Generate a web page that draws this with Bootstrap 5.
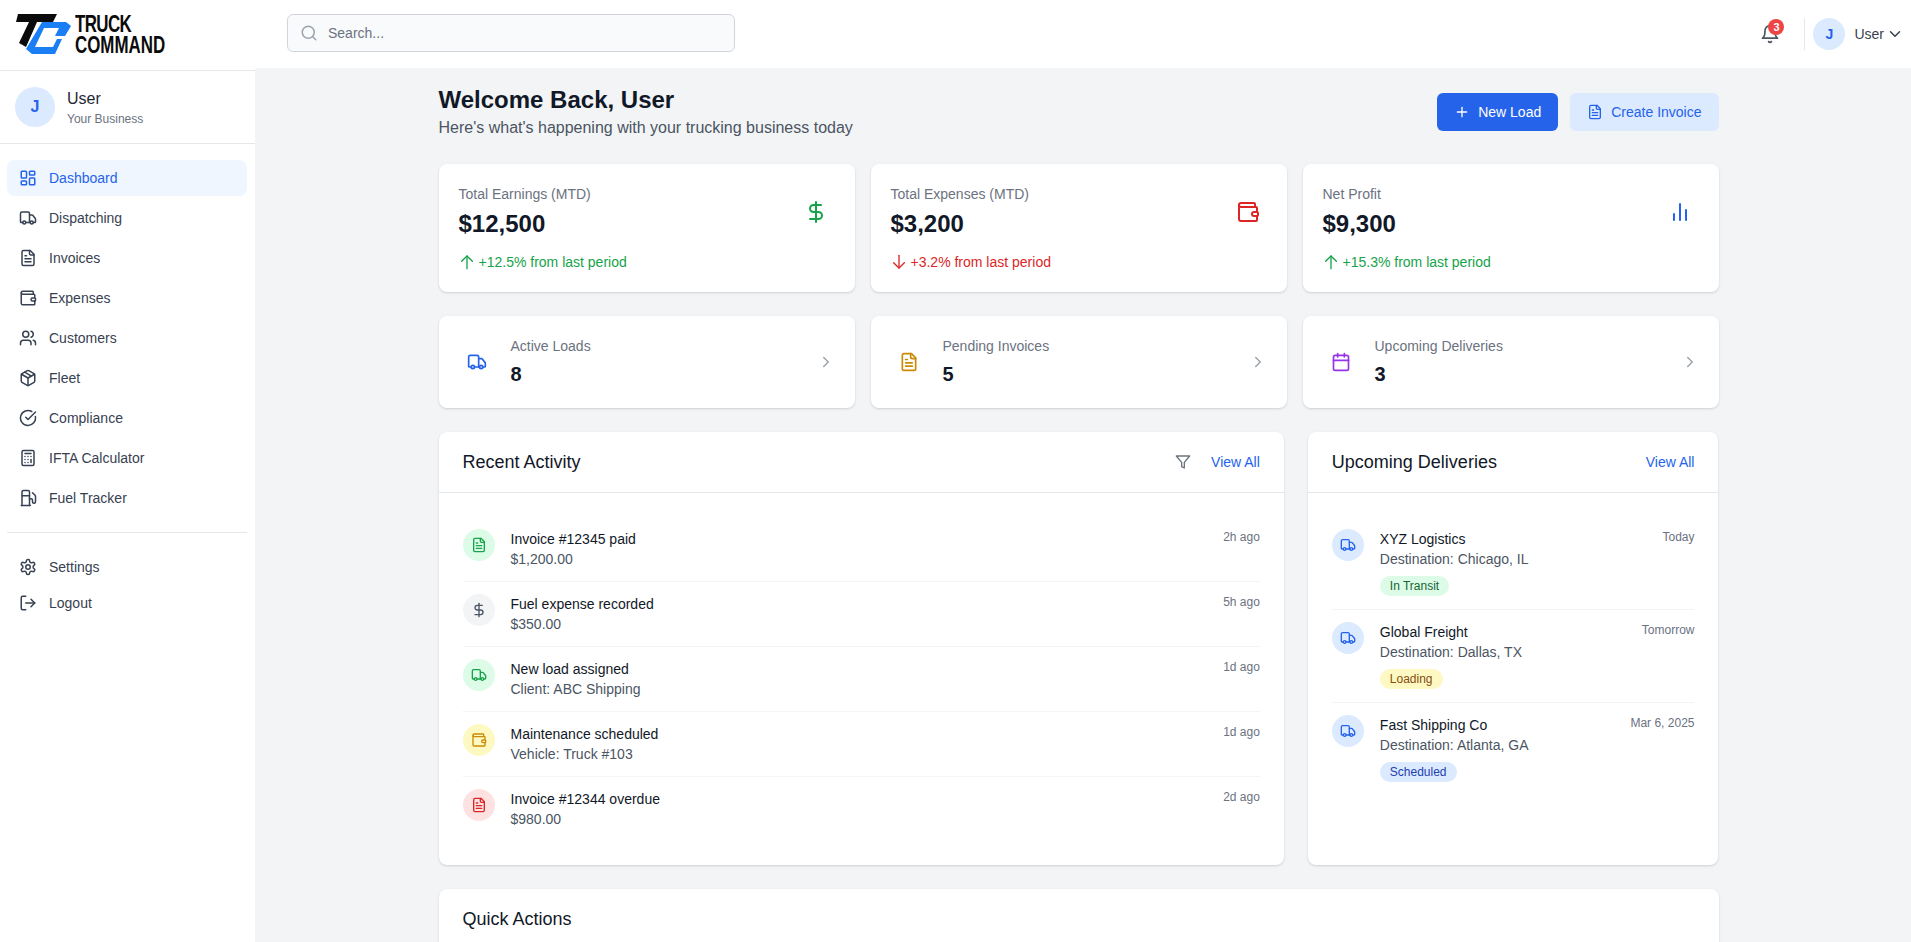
<!DOCTYPE html>
<html lang="en">
<head>
    <meta charset="UTF-8">
    <meta name="viewport" content="width=device-width, initial-scale=1">
    <title>Truck Command</title>
    <link href="https://cdn.jsdelivr.net/npm/bootstrap@5.3.3/dist/css/bootstrap.min.css" rel="stylesheet">
    <style>
        html, body { height: 100%; overflow: hidden; }
        body { font-family: "Liberation Sans", Arial, sans-serif; font-size: 14px; color: #111827; background: #f3f4f6; }
        .ico { fill: none; stroke: currentColor; stroke-width: 2; stroke-linecap: round; stroke-linejoin: round; flex-shrink: 0; display: block; }

        .topbar { height: 68px; background: #fff; }
        .logo-box { width: 287px; padding-left: 14px; }
        .logo-words { margin-left: 1px; margin-top: 2px; font-weight: 700; font-size: 23px; line-height: 21px; color: #0b0b0b; white-space: nowrap; transform: scaleX(.735); transform-origin: left center; }
        .logo-tight { letter-spacing: -.8px; }
        .search-box { width: 448px; height: 38px; margin-bottom: 2px; background: #f9fafb; border: 1px solid #d1d5db; border-radius: 6px; padding: 0 12px; color: #9ca3af; }
        .search-box input { border: 0; outline: 0; background: transparent; font-size: 14px; width: 100%; color: #374151; }
        .search-box input::placeholder { color: #6b7280; opacity: 1; }
        .top-right { padding-right: 7px; }
        .bell-wrap { width: 20px; height: 20px; color: #4b5563; margin-right: 24px; }
        .bell-count { position: absolute; top: -5px; right: -4px; width: 16px; height: 16px; border-radius: 50%; background: #ef4444; color: #fff; font-size: 11px; font-weight: 700; line-height: 16px; text-align: center; }
        .top-sep { width: 1px; height: 32px; background: #e5e7eb; margin-right: 8px; }
        .avatar-circle { background: #dbeafe; color: #2563eb; border-radius: 50%; font-weight: 700; flex-shrink: 0; }
        .avatar-sm { width: 32px; height: 32px; font-size: 14px; }
        .avatar-md { width: 40px; height: 40px; font-size: 16px; }
        .top-user { color: #374151; margin-left: 9px; margin-right: 2px; }
        .top-caret { color: #374151; }

        .app-body { height: calc(100vh - 68px); }
        .sidebar { width: 256px; background: #fff; border-right: 1px solid #f3f4f6; padding-top: 2px; flex-shrink: 0; }
        .side-user { border-top: 1px solid #e5e7eb; border-bottom: 1px solid #e5e7eb; padding: 16px 15px; height: 74px; }
        .side-user-name { font-size: 16px; line-height: 24px; color: #1f2937; }
        .side-user-biz { font-size: 12px; line-height: 16px; color: #6b7280; }
        .side-nav { padding: 16px 8px 16px 7px; }
        .side-nav .nav-link { display: flex; align-items: center; gap: 12px; height: 36px; padding: 0 12px; border-radius: 8px; color: #374151; font-size: 14px; margin-bottom: 4px; }
        .side-nav .nav-link.active { background: #eff6ff; color: #2563eb; }
        .side-extra { margin: 0 8px 0 7px; padding-top: 16px; border-top: 1px solid #e5e7eb; }
        .side-extra .nav-link { display: flex; align-items: center; gap: 12px; height: 36px; padding: 0 12px; color: #374151; font-size: 14px; }

        .main-area { padding-top: 16px; overflow: hidden; }
        .page-wrap { width: 1280px; margin-left: 182.5px; }
        .page-head { margin-bottom: 24px; }
        .page-title { font-size: 24px; line-height: 32px; font-weight: 700; color: #111827; margin: 0; }
        .page-sub { font-size: 16px; line-height: 24px; color: #4b5563; margin: 0; }
        .btn-head { display: inline-flex; align-items: center; gap: 8px; height: 38px; padding: 0 16px; font-size: 14px; border-radius: 6px; border: 1px solid transparent; }
        .btn-new { background: #2563eb; color: #fff; }
        .btn-inv { background: #dbeafe; color: #2563eb; }

        .tile { border: 0; border-radius: 8px; background: #fff; box-shadow: 0 1px 3px rgba(0,0,0,.1), 0 1px 2px rgba(0,0,0,.06); }
        .stat-tile { height: 128px; padding: 20px; }
        .stat-label { font-size: 14px; line-height: 20px; color: #6b7280; }
        .stat-value { font-size: 24px; line-height: 32px; font-weight: 700; color: #111827; margin-top: 4px; }
        .stat-delta { display: flex; align-items: center; gap: 4px; line-height: 20px; margin-top: 12px; }
        .stat-icon { width: 40px; height: 40px; margin-top: 8px; margin-right: -1px; }
        .mini-tile { height: 92px; padding: 20px; }
        .mini-icon { width: 36px; height: 36px; margin-right: 16px; }
        .mini-value { font-size: 20px; line-height: 28px; font-weight: 700; color: #111827; margin-top: 4px; }
        .mini-arrow { color: #9ca3af; }
        .up-green { color: #16a34a; }
        .down-red { color: #dc2626; }
        .c-blue { color: #2563eb; }
        .c-amber { color: #ca8a04; }
        .c-purple { color: #9333ea; }

        .tile-head { height: 61px; padding: 0 24px; border-bottom: 1px solid #e5e7eb; }
        .tile-title { font-size: 18px; font-weight: 400; color: #111827; margin: 2px 0 0; }
        .view-all { color: #2563eb; text-decoration: none; font-size: 14px; }
        .filter-ico { color: #6b7280; margin-right: 20px; }
        .tile-body { padding: 24px; }
        .feed-row { display: flex; gap: 16px; padding: 12px 0; border-bottom: 1px solid #f3f4f6; }
        .feed-row:last-child { border-bottom: 0; }
        .feed-dot { width: 32px; height: 32px; border-radius: 50%; flex-shrink: 0; }
        .dot-green { background: #dcfce7; color: #16a34a; }
        .dot-gray { background: #f3f4f6; color: #4b5563; }
        .dot-yellow { background: #fef9c3; color: #ca8a04; }
        .dot-red { background: #fee2e2; color: #dc2626; }
        .dot-blue { background: #dbeafe; color: #2563eb; }
        .feed-title { line-height: 20px; color: #111827; }
        .feed-sub { line-height: 20px; color: #4b5563; }
        .feed-time { font-size: 12px; line-height: 16px; color: #6b7280; white-space: nowrap; }
        .state-pill { display: inline-block; font-size: 12px; line-height: 16px; padding: 2px 10px; border-radius: 10px; margin-top: 7px; margin-bottom: 1px; vertical-align: top; }
        .pill-green { background: #dcfce7; color: #166534; }
        .pill-yellow { background: #fef9c3; color: #854d0e; }
        .pill-blue { background: #dbeafe; color: #1e40af; }
    </style>
</head>
<body>

    <svg width="0" height="0" class="position-absolute">
        <symbol id="i-dashboard" viewBox="0 0 24 24"><rect x="3" y="3" width="7" height="9" rx="1"/><rect x="14" y="3" width="7" height="5" rx="1"/><rect x="14" y="12" width="7" height="9" rx="1"/><rect x="3" y="16" width="7" height="5" rx="1"/></symbol>
        <symbol id="i-truck" viewBox="0 0 24 24"><path d="M14 18V6a2 2 0 0 0-2-2H4a2 2 0 0 0-2 2v11a1 1 0 0 0 1 1h2"/><path d="M15 18H9"/><path d="M19 18h2a1 1 0 0 0 1-1v-3.65a1 1 0 0 0-.22-.624l-3.48-4.35A1 1 0 0 0 17.52 8H14"/><circle cx="17" cy="18" r="2"/><circle cx="7" cy="18" r="2"/></symbol>
        <symbol id="i-file" viewBox="0 0 24 24"><path d="M15 2H6a2 2 0 0 0-2 2v16a2 2 0 0 0 2 2h12a2 2 0 0 0 2-2V7Z"/><path d="M14 2v4a2 2 0 0 0 2 2h4"/><path d="M10 9H8"/><path d="M16 13H8"/><path d="M16 17H8"/></symbol>
        <symbol id="i-wallet" viewBox="0 0 24 24"><path d="M19 7V4a1 1 0 0 0-1-1H5a2 2 0 0 0 0 4h15a1 1 0 0 1 1 1v4h-3a2 2 0 0 0 0 4h3a1 1 0 0 0 1-1v-2a1 1 0 0 0-1-1"/><path d="M3 5v14a2 2 0 0 0 2 2h15a1 1 0 0 0 1-1v-4"/></symbol>
        <symbol id="i-users" viewBox="0 0 24 24"><path d="M16 21v-2a4 4 0 0 0-4-4H6a4 4 0 0 0-4 4v2"/><circle cx="9" cy="7" r="4"/><path d="M22 21v-2a4 4 0 0 0-3-3.87"/><path d="M16 3.13a4 4 0 0 1 0 7.75"/></symbol>
        <symbol id="i-box" viewBox="0 0 24 24"><path d="m7.5 4.27 9 5.15"/><path d="M21 8a2 2 0 0 0-1-1.73l-7-4a2 2 0 0 0-2 0l-7 4A2 2 0 0 0 3 8v8a2 2 0 0 0 1 1.73l7 4a2 2 0 0 0 2 0l7-4A2 2 0 0 0 21 16Z"/><path d="m3.3 7 8.7 5 8.7-5"/><path d="M12 22V12"/></symbol>
        <symbol id="i-check" viewBox="0 0 24 24"><path d="M21.801 10A10 10 0 1 1 17 3.335"/><path d="m9 11 3 3L22 4"/></symbol>
        <symbol id="i-calc" viewBox="0 0 24 24"><rect x="4" y="2" width="16" height="20" rx="2"/><path d="M8 6h8"/><path d="M16 14v4"/><path d="M16 10h.01"/><path d="M12 10h.01"/><path d="M8 10h.01"/><path d="M12 14h.01"/><path d="M8 14h.01"/><path d="M12 18h.01"/><path d="M8 18h.01"/></symbol>
        <symbol id="i-fuel" viewBox="0 0 24 24"><path d="M3 22h12"/><path d="M4 9h10"/><path d="M14 22V4a2 2 0 0 0-2-2H6a2 2 0 0 0-2 2v18"/><path d="M14 13h2a2 2 0 0 1 2 2v2a2 2 0 0 0 2 2a2 2 0 0 0 2-2V9.83a2 2 0 0 0-.59-1.42L18 5"/></symbol>
        <symbol id="i-gear" viewBox="0 0 24 24"><path d="M12.22 2h-.44a2 2 0 0 0-2 2v.18a2 2 0 0 1-1 1.73l-.43.25a2 2 0 0 1-2 0l-.15-.08a2 2 0 0 0-2.73.73l-.22.38a2 2 0 0 0 .73 2.73l.15.1a2 2 0 0 1 1 1.72v.51a2 2 0 0 1-1 1.74l-.15.09a2 2 0 0 0-.73 2.73l.22.38a2 2 0 0 0 2.73.73l.15-.08a2 2 0 0 1 2 0l.43.25a2 2 0 0 1 1 1.73V20a2 2 0 0 0 2 2h.44a2 2 0 0 0 2-2v-.18a2 2 0 0 1 1-1.73l.43-.25a2 2 0 0 1 2 0l.15.08a2 2 0 0 0 2.73-.73l.22-.39a2 2 0 0 0-.73-2.73l-.15-.08a2 2 0 0 1-1-1.74v-.5a2 2 0 0 1 1-1.74l.15-.09a2 2 0 0 0 .73-2.73l-.22-.38a2 2 0 0 0-2.73-.73l-.15.08a2 2 0 0 1-2 0l-.43-.25a2 2 0 0 1-1-1.73V4a2 2 0 0 0-2-2z"/><circle cx="12" cy="12" r="3"/></symbol>
        <symbol id="i-logout" viewBox="0 0 24 24"><path d="M9 21H5a2 2 0 0 1-2-2V5a2 2 0 0 1 2-2h4"/><path d="m16 17 5-5-5-5"/><path d="M21 12H9"/></symbol>
        <symbol id="i-bell" viewBox="0 0 24 24"><path d="M6 8a6 6 0 0 1 12 0c0 7 3 9 3 9H3s3-2 3-9"/><path d="M10.3 21a1.94 1.94 0 0 0 3.4 0"/></symbol>
        <symbol id="i-search" viewBox="0 0 24 24"><circle cx="11" cy="11" r="8"/><path d="m21 21-4.3-4.3"/></symbol>
        <symbol id="i-down" viewBox="0 0 24 24"><path d="m6 9 6 6 6-6"/></symbol>
        <symbol id="i-right" viewBox="0 0 24 24"><path d="m9 18 6-6-6-6"/></symbol>
        <symbol id="i-plus" viewBox="0 0 24 24"><path d="M5 12h14"/><path d="M12 5v14"/></symbol>
        <symbol id="i-dollar" viewBox="0 0 24 24"><path d="M12 2v20"/><path d="M17 5H9.5a3.5 3.5 0 0 0 0 7h5a3.5 3.5 0 0 1 0 7H6"/></symbol>
        <symbol id="i-arrow-up" viewBox="0 0 24 24"><path d="m4 11 8-8 8 8"/><path d="M12 22V3"/></symbol>
        <symbol id="i-arrow-down" viewBox="0 0 24 24"><path d="M12 2v19"/><path d="m20 13-8 8-8-8"/></symbol>
        <symbol id="i-bars" viewBox="0 0 24 24"><path d="M18 20V10"/><path d="M12 20V4"/><path d="M6 20v-6"/></symbol>
        <symbol id="i-cal" viewBox="0 0 24 24"><rect x="3" y="4" width="18" height="18" rx="2"/><path d="M16 2v4"/><path d="M8 2v4"/><path d="M3 10h18"/></symbol>
        <symbol id="i-filter" viewBox="0 0 24 24"><path d="M22 3H2l8 9.46V19l4 2v-8.54L22 3z"/></symbol>
    </svg>

    <header class="topbar d-flex align-items-center">
        <div class="logo-box d-flex align-items-center">
            <svg width="60" height="68" viewBox="14 0 60 68" class="d-block flex-shrink-0">
                <polygon fill="#0b0b0b" points="18,14 57,14 53,22 37,22 26,47 19,43 29,22 16,22"/>
                <polygon fill="#1a7ef5" points="42,22 66,22 71,26 65,36 55,36 59,28 44,28 35,47 53,47 57,39 62,39 55,54 32,54 26,49"/>
            </svg>
            <div class="logo-words"><span class="logo-tight">TRUCK</span><br>COMMAND</div>
        </div>
        <div class="search-box d-flex align-items-center gap-2">
            <svg class="ico" width="18" height="18"><use href="#i-search"/></svg>
            <input type="text" placeholder="Search...">
        </div>
        <div class="top-right ms-auto d-flex align-items-center">
            <div class="bell-wrap position-relative">
                <svg class="ico" width="20" height="20"><use href="#i-bell"/></svg>
                <span class="bell-count">3</span>
            </div>
            <div class="top-sep"></div>
            <div class="avatar-circle avatar-sm d-flex align-items-center justify-content-center">J</div>
            <span class="top-user">User</span>
            <svg class="ico top-caret" width="18" height="18"><use href="#i-down"/></svg>
        </div>
    </header>

    <div class="app-body d-flex">
        <aside class="sidebar">
            <div class="side-user d-flex align-items-center gap-2">
                <div class="avatar-circle avatar-md d-flex align-items-center justify-content-center me-1">J</div>
                <div>
                    <div class="side-user-name">User</div>
                    <div class="side-user-biz">Your Business</div>
                </div>
            </div>
            <nav class="side-nav nav flex-column">
                <a class="nav-link active" href="#"><svg class="ico" width="18" height="18"><use href="#i-dashboard"/></svg>Dashboard</a>
                <a class="nav-link" href="#"><svg class="ico" width="18" height="18"><use href="#i-truck"/></svg>Dispatching</a>
                <a class="nav-link" href="#"><svg class="ico" width="18" height="18"><use href="#i-file"/></svg>Invoices</a>
                <a class="nav-link" href="#"><svg class="ico" width="18" height="18"><use href="#i-wallet"/></svg>Expenses</a>
                <a class="nav-link" href="#"><svg class="ico" width="18" height="18"><use href="#i-users"/></svg>Customers</a>
                <a class="nav-link" href="#"><svg class="ico" width="18" height="18"><use href="#i-box"/></svg>Fleet</a>
                <a class="nav-link" href="#"><svg class="ico" width="18" height="18"><use href="#i-check"/></svg>Compliance</a>
                <a class="nav-link" href="#"><svg class="ico" width="18" height="18"><use href="#i-calc"/></svg>IFTA Calculator</a>
                <a class="nav-link mb-0" href="#"><svg class="ico" width="18" height="18"><use href="#i-fuel"/></svg>Fuel Tracker</a>
            </nav>
            <nav class="side-extra nav flex-column">
                <a class="nav-link" href="#"><svg class="ico" width="18" height="18"><use href="#i-gear"/></svg>Settings</a>
                <a class="nav-link" href="#"><svg class="ico" width="18" height="18"><use href="#i-logout"/></svg>Logout</a>
            </nav>
        </aside>

        <main class="main-area flex-grow-1">
            <div class="page-wrap">
                <div class="page-head d-flex justify-content-between align-items-center">
                    <div>
                        <h1 class="page-title">Welcome Back, User</h1>
                        <p class="page-sub">Here's what's happening with your trucking business today</p>
                    </div>
                    <div class="d-flex gap-2">
                        <button class="btn-head btn-new me-1"><svg class="ico" width="16" height="16"><use href="#i-plus"/></svg>New Load</button>
                        <button class="btn-head btn-inv"><svg class="ico" width="16" height="16"><use href="#i-file"/></svg>Create Invoice</button>
                    </div>
                </div>

                <div class="row g-3 mb-4">
                    <div class="col-4">
                        <div class="card tile stat-tile flex-row justify-content-between">
                            <div>
                                <div class="stat-label">Total Earnings (MTD)</div>
                                <div class="stat-value">$12,500</div>
                                <div class="stat-delta up-green"><svg class="ico" width="16" height="16"><use href="#i-arrow-up"/></svg>+12.5% from last period</div>
                            </div>
                            <div class="stat-icon up-green d-flex align-items-center justify-content-center"><svg class="ico" width="24" height="24"><use href="#i-dollar"/></svg></div>
                        </div>
                    </div>
                    <div class="col-4">
                        <div class="card tile stat-tile flex-row justify-content-between">
                            <div>
                                <div class="stat-label">Total Expenses (MTD)</div>
                                <div class="stat-value">$3,200</div>
                                <div class="stat-delta down-red"><svg class="ico" width="16" height="16"><use href="#i-arrow-down"/></svg>+3.2% from last period</div>
                            </div>
                            <div class="stat-icon down-red d-flex align-items-center justify-content-center"><svg class="ico" width="24" height="24"><use href="#i-wallet"/></svg></div>
                        </div>
                    </div>
                    <div class="col-4">
                        <div class="card tile stat-tile flex-row justify-content-between">
                            <div>
                                <div class="stat-label">Net Profit</div>
                                <div class="stat-value">$9,300</div>
                                <div class="stat-delta up-green"><svg class="ico" width="16" height="16"><use href="#i-arrow-up"/></svg>+15.3% from last period</div>
                            </div>
                            <div class="stat-icon c-blue d-flex align-items-center justify-content-center"><svg class="ico" width="24" height="24"><use href="#i-bars"/></svg></div>
                        </div>
                    </div>
                </div>

                <div class="row g-3 mb-4">
                    <div class="col-4">
                        <div class="card tile mini-tile flex-row align-items-center">
                            <div class="mini-icon c-blue d-flex align-items-center justify-content-center"><svg class="ico" width="20" height="20"><use href="#i-truck"/></svg></div>
                            <div class="flex-grow-1">
                                <div class="stat-label">Active Loads</div>
                                <div class="mini-value">8</div>
                            </div>
                            <svg class="ico mini-arrow" width="18" height="18"><use href="#i-right"/></svg>
                        </div>
                    </div>
                    <div class="col-4">
                        <div class="card tile mini-tile flex-row align-items-center">
                            <div class="mini-icon c-amber d-flex align-items-center justify-content-center"><svg class="ico" width="20" height="20"><use href="#i-file"/></svg></div>
                            <div class="flex-grow-1">
                                <div class="stat-label">Pending Invoices</div>
                                <div class="mini-value">5</div>
                            </div>
                            <svg class="ico mini-arrow" width="18" height="18"><use href="#i-right"/></svg>
                        </div>
                    </div>
                    <div class="col-4">
                        <div class="card tile mini-tile flex-row align-items-center">
                            <div class="mini-icon c-purple d-flex align-items-center justify-content-center"><svg class="ico" width="20" height="20"><use href="#i-cal"/></svg></div>
                            <div class="flex-grow-1">
                                <div class="stat-label">Upcoming Deliveries</div>
                                <div class="mini-value">3</div>
                            </div>
                            <svg class="ico mini-arrow" width="18" height="18"><use href="#i-right"/></svg>
                        </div>
                    </div>
                </div>

                <div class="row g-4 mb-4">
                    <div class="col-8">
                        <div class="card tile h-100">
                            <div class="tile-head d-flex align-items-center justify-content-between">
                                <h2 class="tile-title">Recent Activity</h2>
                                <div class="d-flex align-items-center">
                                    <svg class="ico filter-ico" width="16" height="16"><use href="#i-filter"/></svg>
                                    <a class="view-all" href="#">View All</a>
                                </div>
                            </div>
                            <div class="tile-body">
                                <div class="feed-row">
                                    <div class="feed-dot dot-green d-flex align-items-center justify-content-center"><svg class="ico" width="16" height="16"><use href="#i-file"/></svg></div>
                                    <div class="flex-grow-1"><div class="feed-title">Invoice #12345 paid</div><div class="feed-sub">$1,200.00</div></div>
                                    <div class="feed-time">2h ago</div>
                                </div>
                                <div class="feed-row">
                                    <div class="feed-dot dot-gray d-flex align-items-center justify-content-center"><svg class="ico" width="16" height="16"><use href="#i-dollar"/></svg></div>
                                    <div class="flex-grow-1"><div class="feed-title">Fuel expense recorded</div><div class="feed-sub">$350.00</div></div>
                                    <div class="feed-time">5h ago</div>
                                </div>
                                <div class="feed-row">
                                    <div class="feed-dot dot-green d-flex align-items-center justify-content-center"><svg class="ico" width="16" height="16"><use href="#i-truck"/></svg></div>
                                    <div class="flex-grow-1"><div class="feed-title">New load assigned</div><div class="feed-sub">Client: ABC Shipping</div></div>
                                    <div class="feed-time">1d ago</div>
                                </div>
                                <div class="feed-row">
                                    <div class="feed-dot dot-yellow d-flex align-items-center justify-content-center"><svg class="ico" width="16" height="16"><use href="#i-wallet"/></svg></div>
                                    <div class="flex-grow-1"><div class="feed-title">Maintenance scheduled</div><div class="feed-sub">Vehicle: Truck #103</div></div>
                                    <div class="feed-time">1d ago</div>
                                </div>
                                <div class="feed-row">
                                    <div class="feed-dot dot-red d-flex align-items-center justify-content-center"><svg class="ico" width="16" height="16"><use href="#i-file"/></svg></div>
                                    <div class="flex-grow-1"><div class="feed-title">Invoice #12344 overdue</div><div class="feed-sub">$980.00</div></div>
                                    <div class="feed-time">2d ago</div>
                                </div>
                            </div>
                        </div>
                    </div>
                    <div class="col-4">
                        <div class="card tile h-100">
                            <div class="tile-head d-flex align-items-center justify-content-between">
                                <h2 class="tile-title">Upcoming Deliveries</h2>
                                <a class="view-all" href="#">View All</a>
                            </div>
                            <div class="tile-body">
                                <div class="feed-row">
                                    <div class="feed-dot dot-blue d-flex align-items-center justify-content-center"><svg class="ico" width="16" height="16"><use href="#i-truck"/></svg></div>
                                    <div class="flex-grow-1"><div class="feed-title">XYZ Logistics</div><div class="feed-sub">Destination: Chicago, IL</div><span class="state-pill pill-green">In Transit</span></div>
                                    <div class="feed-time">Today</div>
                                </div>
                                <div class="feed-row">
                                    <div class="feed-dot dot-blue d-flex align-items-center justify-content-center"><svg class="ico" width="16" height="16"><use href="#i-truck"/></svg></div>
                                    <div class="flex-grow-1"><div class="feed-title">Global Freight</div><div class="feed-sub">Destination: Dallas, TX</div><span class="state-pill pill-yellow">Loading</span></div>
                                    <div class="feed-time">Tomorrow</div>
                                </div>
                                <div class="feed-row">
                                    <div class="feed-dot dot-blue d-flex align-items-center justify-content-center"><svg class="ico" width="16" height="16"><use href="#i-truck"/></svg></div>
                                    <div class="flex-grow-1"><div class="feed-title">Fast Shipping Co</div><div class="feed-sub">Destination: Atlanta, GA</div><span class="state-pill pill-blue">Scheduled</span></div>
                                    <div class="feed-time">Mar 6, 2025</div>
                                </div>
                            </div>
                        </div>
                    </div>
                </div>

                <div class="card tile">
                    <div class="tile-head d-flex align-items-center">
                        <h2 class="tile-title">Quick Actions</h2>
                    </div>
                </div>
            </div>
        </main>
    </div>

    <script src="https://cdn.jsdelivr.net/npm/bootstrap@5.3.3/dist/js/bootstrap.bundle.min.js"></script>
</body>
</html>
